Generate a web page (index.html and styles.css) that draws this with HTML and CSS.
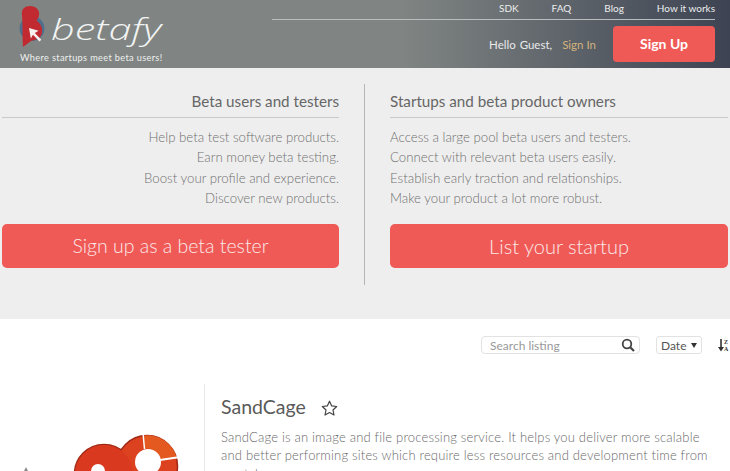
FILE: index.html
```html
<!DOCTYPE html>
<html lang="en">
<head>
<meta charset="utf-8">
<title>betafy</title>
<link rel="stylesheet" href="styles.css">
</head>
<body>
<header class="site-header">
  <div class="brand">
    <div class="brand-row">
      <svg class="brand-mark" width="30" height="46" viewBox="0 0 30 46" aria-hidden="true">
        <circle cx="13" cy="22.500" r="12.500" fill="#4f6f8d"/>
        <path d="M3 9C2 3 6 0 11 0c6 0 10 4 9 9-.4 2.500-1.500 4-2.500 5.500C21 17 24 21 23 27c-1 5-6 7-11 8l-8 6C3 30 4 20 3 9Z" fill="#c02a30"/>
        <path d="M10 22l1.800 10.500 2.200-3.800 6.500 6.800 1.800-1.800-6.500-6.800 3.800-2.200Z" fill="#f6f1ef"/>
      </svg>
      <span class="brand-name">betafy</span>
    </div>
    <div class="brand-tag">Where startups meet beta users!</div>
  </div>
  <div class="head-right">
    <nav class="top-nav">
      <a>SDK</a><a>FAQ</a><a>Blog</a><a>How it works</a>
    </nav>
    <div class="account">
      <span class="hello">Hello Guest,</span>
      <a class="signin">Sign In</a>
      <a class="signup">Sign Up</a>
    </div>
  </div>
</header>

<section class="hero">
  <div class="hero-col hero-left">
    <h2>Beta users and testers</h2>
    <ul>
      <li>Help beta test software products.</li>
      <li>Earn money beta testing.</li>
      <li>Boost your profile and experience.</li>
      <li>Discover new products.</li>
    </ul>
    <a class="cta">Sign up as a beta tester</a>
  </div>
  <div class="hero-col hero-right">
    <h2>Startups and beta product owners</h2>
    <ul>
      <li>Access a large pool beta users and testers.</li>
      <li>Connect with relevant beta users easily.</li>
      <li>Establish early traction and relationships.</li>
      <li>Make your product a lot more robust.</li>
    </ul>
    <a class="cta">List your startup</a>
  </div>
</section>

<section class="toolbar">
  <div class="search">
    <span class="search-text">Search listing</span>
    <svg width="14" height="14" viewBox="0 0 14 14" aria-hidden="true"><circle cx="6" cy="6" r="4.300" fill="none" stroke="#444" stroke-width="1.800"/><path d="M9.200 9.200L13 13" stroke="#444" stroke-width="2.200"/></svg>
  </div>
  <div class="select"><span>Date</span><span class="caret"></span></div>
  <div class="sort">
    <svg width="6" height="13" viewBox="0 0 6 13" aria-hidden="true"><path d="M3 0v9" stroke="#333" stroke-width="1.600"/><path d="M0 8h6l-3 4.500Z" fill="#333"/></svg>
    <span class="sort-letters">Z<br>A</span>
  </div>
</section>

<article class="listing">
  <div class="listing-logo">
    <svg width="204" height="87" viewBox="0 0 204 87" aria-hidden="true">
      <path d="M26 83l-5 10h10Z" fill="#8a8a8a"/>
      <circle cx="104" cy="90" r="29.500" fill="#d93a1f" stroke="#a02a16" stroke-width="1.500"/>
      <circle cx="147" cy="82" r="30.500" fill="#dc421f" stroke="#a02a16" stroke-width="1.500"/>
      <circle cx="104" cy="90" r="29" fill="#d93a1f"/>
      <path d="M144 51.500a30.500 30.500 0 0 1 33 23L160 76a13 13 0 0 0-16-11Z" fill="#e3591f"/>
      <circle cx="148" cy="78" r="13" fill="#fff"/>
      <circle cx="98" cy="87" r="7" fill="#fff"/>
      <path d="M143 49l1.500 16" stroke="#fff" stroke-width="1.500"/>
      <path d="M160 76l20-3" stroke="#fff" stroke-width="2"/>
    </svg>
  </div>
  <div class="listing-body">
    <div class="listing-title">
      <h3>SandCage</h3>
      <svg class="star" width="17" height="16" viewBox="0 0 17 16" aria-hidden="true"><path d="M8.500 1.200l2.200 4.700 5 .6-3.700 3.500 1 5-4.500-2.500-4.500 2.500 1-5L1.300 6.500l5-.6Z" fill="none" stroke="#444" stroke-width="1.200" stroke-linejoin="round"/></svg>
    </div>
    <p>SandCage is an image and file processing service. It helps you deliver more scalable and better performing sites which require less resources and development time from scratch.</p>
  </div>
</article>
</body>
</html>
```
FILE: styles.css
```css
* { box-sizing: border-box; }
html, body { margin: 0; height: 471px; overflow: hidden; background: #fff; }
body { font-family: Lato, "Liberation Sans", sans-serif; color: #555; }
a { display: block; }

.site-header {
  height: 68px;
  display: flex;
  justify-content: space-between;
  padding: 0 15px 0 19px;
  background: linear-gradient(90deg, #808583 0%, #808583 55%, #3d4352 100%);
}
.brand { display: flex; flex-direction: column; padding-top: 6px; }
.brand-row { display: flex; align-items: flex-start; height: 45px; }
.brand-mark { flex: none; }
.brand-name {
  display: inline-block;
  font-family: "Open Sans", sans-serif;
  font-weight: 300;
  font-style: italic;
  font-size: 29px;
  line-height: 46px;
  color: #f2f4f3;
  margin-left: 2px;
  transform: scaleX(1.43);
  transform-origin: left center;
}
.brand-tag { font-size: 9.200px; line-height: 12px; color: #eef0ef; letter-spacing: .35px; margin: 1px 0 0 1px; }

.head-right { width: 443px; display: flex; flex-direction: column; }
.top-nav {
  height: 20px;
  display: flex;
  justify-content: flex-end;
  gap: 33px;
  border-bottom: 1px solid #b9bdc0;
  font-size: 10px;
  line-height: 17px;
  color: #eceeef;
}
.account { display: flex; justify-content: flex-end; align-items: center; margin-top: 6px; font-size: 11.500px; }
.hello { color: #e8eaea; word-spacing: 1px; }
.signin { color: #d2b27a; margin-left: 10px; margin-right: 17px; }
.signup {
  width: 102px;
  height: 36px;
  line-height: 36px;
  text-align: center;
  background: #ef5a57;
  border-radius: 4px;
  color: #fff;
  font-size: 14px;
  font-weight: 700;
}

.hero {
  height: 251px;
  background: #eeeeee;
  padding: 16px 2px 0;
  display: grid;
  grid-template-columns: 337px 338px;
  column-gap: 51px;
}
.hero-col h2 {
  margin: 0;
  height: 34px;
  font-size: 15.200px;
  line-height: 34px;
  font-weight: 400;
  color: #666;
  border-bottom: 1px solid #c9c9c9;
}
.hero-left { text-align: right; position: relative; }
.hero-left::after {
  content: "";
  position: absolute;
  top: 0;
  bottom: 34px;
  right: -26px;
  width: 1px;
  background: #b5b5b5;
}
.hero-col ul { list-style: none; margin: 9px 0 16px; padding: 0; font-size: 13.250px; font-weight: 300; line-height: 20.300px; color: #707070; }
.cta {
  height: 44px;
  line-height: 44px;
  text-align: center;
  background: #ef5a57;
  border-radius: 5px;
  color: #fbe9e8;
  font-size: 20px;
  font-weight: 300;
}
.hero-left .cta { font-size: 19.500px; }

.toolbar {
  height: 65px;
  display: flex;
  align-items: flex-start;
  padding: 17px 0 0 481px;
}
.search {
  width: 159px;
  height: 18px;
  display: flex;
  justify-content: space-between;
  align-items: center;
  padding: 0 4px 0 8px;
  border: 1px solid #e2e2e2;
  border-radius: 4px;
  font-size: 12px;
  color: #999;
}
.select {
  width: 46px;
  height: 18px;
  margin-left: 16px;
  display: flex;
  align-items: center;
  gap: 5px;
  padding-left: 4px;
  border: 1px solid #e2e2e2;
  border-radius: 3px;
  font-size: 12px;
  color: #555;
}
.caret { width: 0; height: 0; border: 3px solid transparent; border-top: 5px solid #333; border-bottom: 0; }
.sort { display: flex; flex: none; width: 12px; margin-left: 16px; padding-top: 3px; }
.sort-letters { font-size: 6px; line-height: 6.500px; font-weight: 700; color: #333; font-family: "Liberation Serif", serif; }

.listing { display: flex; height: 87px; overflow: hidden; }
.listing-logo { width: 205px; height: 87px; border-right: 1px solid #e8e8e8; flex: none; }
.listing-body { padding: 10px 16px 0 16px; flex: 1; }
.listing-title { display: flex; align-items: center; gap: 15px; height: 26px; }
.listing-title h3 { margin: 0; font-size: 19.500px; line-height: 26px; font-weight: 400; color: #5a5a5a; }
.star { margin-top: 1px; }
.listing-body p { margin: 7.500px 0 0; font-size: 13px; line-height: 18.500px; font-weight: 300; color: #6a6a6a; letter-spacing: .19px; }
```
